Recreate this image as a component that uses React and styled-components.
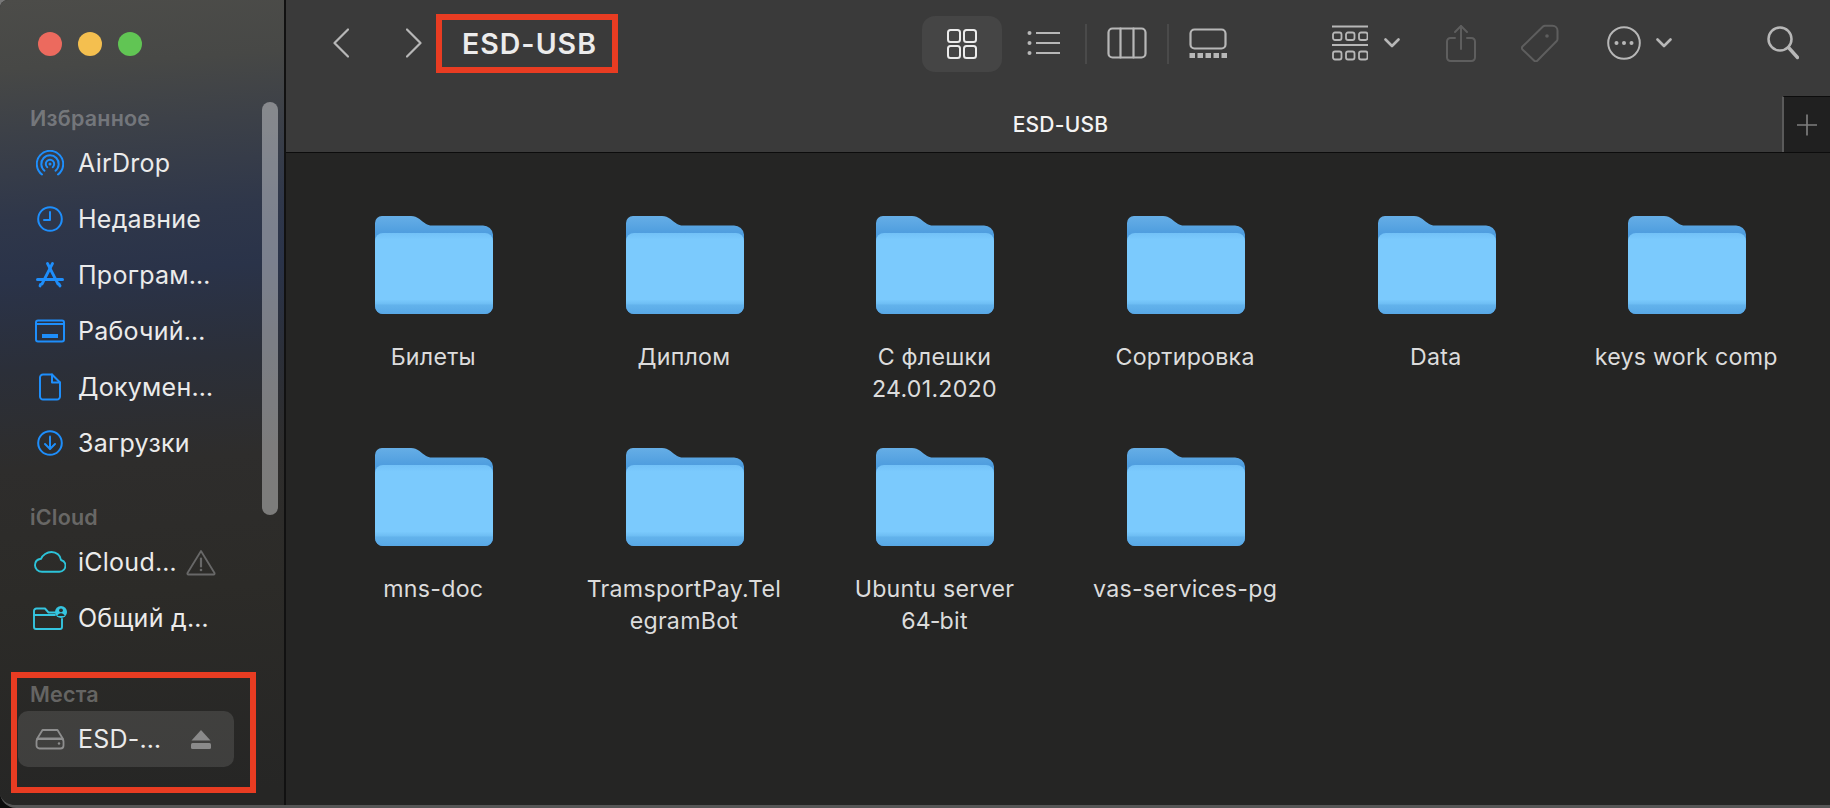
import React from "react";
import styled, { createGlobalStyle } from "styled-components";

const Global = createGlobalStyle`
  html, body { margin: 0; padding: 0; height: 100%; background: linear-gradient(#777 0 50%, #0c0c0c 50%); overflow: hidden; }
  #root { height: 100%; }
  * { box-sizing: border-box; }
`;

const Window = styled.div`
  width: 1830px; height: 808px; display: flex; overflow: hidden;
  border-radius: 8px 0 0 16px; background: #252524; border-bottom: 3px solid #565656;
  font-family: Inter, "Noto Sans", "Liberation Sans", sans-serif;
`;

const Sidebar = styled.aside`
  position: relative; width: 286px; flex: none; padding: 32px 0 0 0;
  border-right: 2px solid #111;
  background: linear-gradient(176deg, #4c4c49 0, #474846 70px, #3d4148 130px, #2f374a 220px, #2a3349 280px, #2b2f39 370px, #2e2d2c 470px, #2c2b28 600px, #262625 805px);
`;

const Lights = styled.div`
  display: flex; gap: 16px; padding-left: 38px; height: 24px; margin-bottom: 46px;
`;
const Light = styled.span`
  width: 24px; height: 24px; border-radius: 50%; background: ${p => p.$c};
`;
const SideSection = styled.div`
  padding: 0 18px; margin-top: ${p => p.$mt || 0}px;
`;
const SideLabel = styled.div`
  height: 33px; line-height: 33px; padding-left: 12px;
  font-size: 21.5px; font-weight: 600; letter-spacing: .2px; color: rgba(255,255,255,.29);
`;
const SideRow = styled.div`
  height: 56px; display: flex; align-items: center; border-radius: 10px;
  font-size: 25px; letter-spacing: .25px; color: #ebebeb; white-space: nowrap;
  background: ${p => p.$active ? "rgba(255,255,255,.115)" : "transparent"};
  width: ${p => p.$active ? "216px" : "auto"};
`;
const SideIcon = styled.span`
  width: 36px; margin: 0 10px 0 14px; display: flex; justify-content: center; align-items: center; flex: none;
  color: ${p => p.$c || "#1e8efb"};
`;
const RowText = styled.span`
  flex: none;
`;
const Trailing = styled.span`
  display: flex; align-items: center; margin-left: ${p => p.$ml}px; color: ${p => p.$c};
`;
const HighlightBox = styled.div`
  width: 245px; height: 121px; margin: 26px 0 0 11px; border: 6px solid #e83c22; padding: 0 0 0 1px;
`;
const ScrollThumb = styled.div`
  position: absolute; left: 262px; top: 102px; width: 16px; height: 413px; border-radius: 8px;
  background: rgba(255,255,255,.38);
`;

const Main = styled.main`
  flex: 1; min-width: 0; display: flex; flex-direction: column;
`;
const Toolbar = styled.div`
  height: 96px; flex: none; background: #3a3a3a; display: flex; align-items: flex-start; padding-top: 15px;
`;
const Tool = styled.div`
  height: 56px; margin-left: ${p => p.$ml}px; display: flex; align-items: center; flex: none;
  color: ${p => p.$c || "#b7b7b7"};
`;
const TitleBox = styled.div`
  margin-left: ${p => p.$ml}px; width: 182px; height: 59px; border: 6px solid #e83c22; flex: none;
  display: flex; align-items: center; padding-left: 20px; margin-top: -1px;
  font-size: 28.5px; font-weight: 600; letter-spacing: 1px; color: #ececec; white-space: nowrap;
`;
const ViewButton = styled.div`
  margin: 1px 0 0 ${p => p.$ml}px; width: 80px; height: 56px; border-radius: 13px; background: #454545; flex: none;
  display: flex; align-items: center; justify-content: center; color: #ebebeb;
`;
const Sep = styled.div`
  margin: 9px 0 0 ${p => p.$ml}px; width: 2px; height: 40px; background: #4a4a4a; flex: none;
`;
const TabBar = styled.div`
  height: 57px; flex: none; background: #3a3a3a; border-bottom: 1px solid #0c0c0c; display: flex;
`;
const TabTitle = styled.div`
  flex: 1; display: flex; align-items: center; justify-content: center; padding-left: 53px;
  font-size: 21px; font-weight: 500; letter-spacing: .25px; color: #f4f4f4;
`;
const AddTab = styled.div`
  width: 48px; flex: none; background: #202020; border-top: 1px solid #0c0c0c; border-left: 2px solid #5a5a5a;
  display: flex; align-items: center; justify-content: center; color: #7d7d7d;
`;
const Content = styled.div`
  flex: 1; background: #252524; padding: 62px 0 0 23px;
  display: grid; grid-template-columns: repeat(6, 250.6px); grid-auto-rows: 232px;
`;
const Item = styled.div`
  display: flex; flex-direction: column; align-items: center;
`;
const ItemLabel = styled.div`
  width: 196px; margin: 28px 2px 0 0; text-align: center; font-size: 23.2px; letter-spacing: .25px; line-height: 32px; color: #dcdcdc;
  overflow-wrap: anywhere;
`;

const Svg = ({ w, h, children, sw = 2, fill = "none" }) => (
  <svg width={w} height={h} viewBox={`0 0 ${w} ${h}`} fill={fill} stroke="currentColor" strokeWidth={sw} strokeLinecap="round" strokeLinejoin="round">{children}</svg>
);

const AirDrop = () => <Svg w={28} h={27} sw={2}>
  <path d="M6 24.5A13.2 13.2 0 1 1 22 24.5" /><path d="M8.5 20.7A8.7 8.7 0 1 1 19.5 20.7" /><path d="M11.3 17.2A4.2 4.2 0 1 1 16.7 17.2" />
  <circle cx="14" cy="14" r="1.5" fill="currentColor" stroke="none" />
</Svg>;
const Clock = () => <Svg w={26} h={26} sw={2}><circle cx="13" cy="13" r="11.8" /><path d="M13 6v8H7" /></Svg>;
const Apps = () => <Svg w={28} h={26} sw={2.8}>
  <path d="M16.5 1.5 6 22" /><path d="M11.5 1.5 22 22" /><path d="M1.5 17.5h25" strokeWidth="3" /><path d="M4.5 22.5l-.5 1.5" /><path d="M23 22l1 2" />
</Svg>;
const Desktop = () => <Svg w={30} h={24} sw={2}>
  <rect x="1" y="1.5" width="28" height="21" rx="2" /><path d="M1 5h28" /><rect x="7" y="15" width="16" height="4" fill="currentColor" stroke="none" />
</Svg>;
const Doc = () => <Svg w={22} h={28} sw={2}>
  <path d="M4 1.5h9l8 8v14a3 3 0 0 1-3 3H4a3 3 0 0 1-3-3v-19a3 3 0 0 1 3-3z" /><path d="M13 1.5v8h8" />
</Svg>;
const Down = () => <Svg w={26} h={26} sw={2}><circle cx="13" cy="13" r="11.8" /><path d="M13 6.5v12" /><path d="M8 14l5 5 5-5" /></Svg>;
const Cloud = () => <Svg w={32} h={22} sw={1.9}>
  <path d="M8 20.8c-4 0-7-3-7-6.500 0-3.500 2.500-6 6-6.500C8.500 4 13 1 17.500 1c5 0 9 3.500 9.500 8 2.800.8 4.500 3 4.500 5.500 0 3.500-2.800 6.300-6 6.300z" />
</Svg>;
const SharedFolder = () => <Svg w={34} h={24} sw={1.9}>
  <path d="M22 6.5H15.5L12 2.5H3.5A2.5 2.5 0 0 0 1 5v16a2 2 0 0 0 2 2h24a2 2 0 0 0 2-2v-8" /><path d="M1 9h21" />
  <circle cx="28" cy="6" r="6" fill="currentColor" stroke="none" />
  <circle cx="28" cy="4.3" r="1.9" fill="#2d2c2a" stroke="none" />
  <path d="M24.4 10c.5-2 2-2.8 3.6-2.8s3.1.8 3.6 2.8z" fill="#2d2c2a" stroke="none" />
</Svg>;
const Warn = () => <Svg w={30} h={27} sw={1.8}>
  <path d="M15 2 28.5 24a1 1 0 0 1-.8 1.5H2.3a1 1 0 0 1-.8-1.5z" /><path d="M15 9.5v8" strokeWidth="2.2" />
  <circle cx="15" cy="21" r="1.3" fill="currentColor" stroke="none" />
</Svg>;
const Drive = () => <Svg w={30} h={22} sw={1.8}>
  <path d="M7.5 2h15l5.500 9H2z" /><rect x="1.5" y="10.5" width="27" height="10" rx="3" />
  <circle cx="24" cy="15.5" r="1.2" fill="currentColor" stroke="none" />
</Svg>;
const Eject = () => <Svg w={20} h={19} sw={0} fill="currentColor">
  <path d="M10 0 19.5 10.5H.5z" stroke="none" /><rect y="13" width="20" height="6" rx="1.5" stroke="none" />
</Svg>;

const Back = () => <Svg w={16} h={30} sw={2.2}><path d="M15 1.5 1.5 15 15 28.5" /></Svg>;
const Fwd = () => <Svg w={16} h={30} sw={2.2}><path d="M1 1.5 14.5 15 1 28.5" /></Svg>;
const IconGrid = () => <Svg w={30} h={30} sw={2}>
  <rect x="1" y="1" width="12" height="12" rx="2.5" /><rect x="17" y="1" width="12" height="12" rx="2.5" />
  <rect x="1" y="17" width="12" height="12" rx="2.5" /><rect x="17" y="17" width="12" height="12" rx="2.5" />
</Svg>;
const ListI = () => <Svg w={33} h={26} sw={2.2}>
  <path d="M9 3h24M9 13h24M9 23h24" strokeLinecap="butt" />
  <circle cx="2.5" cy="3" r="2" fill="currentColor" stroke="none" /><circle cx="2.5" cy="13" r="2" fill="currentColor" stroke="none" /><circle cx="2.5" cy="23" r="2" fill="currentColor" stroke="none" />
</Svg>;
const Columns = () => <Svg w={40} h={32} sw={2.2}>
  <rect x="1.5" y="1.5" width="37" height="29" rx="4" /><path d="M13.5 1.5v29M26.5 1.5v29" />
</Svg>;
const Gallery = () => <Svg w={38} h={30} sw={2.2}>
  <rect x="1.5" y="1.5" width="35" height="19" rx="4" />
  {[0, 8, 16, 24, 32].map(x => <rect key={x} x={x + .5} y="25" width="5.5" height="5" fill="currentColor" stroke="none" />)}
</Svg>;
const Group = () => <Svg w={36} h={36} sw={1.8}>
  <path d="M0 1.5h36M0 20h36" strokeWidth="2" strokeLinecap="butt" />
  {[0, 13, 26].map(x => <rect key={x} x={x + 1} y="7.5" width="8.5" height="7.5" rx="2" />)}
  {[0, 13, 26].map(x => <rect key={"b" + x} x={x + 1} y="26.5" width="8.5" height="8" rx="2" />)}
</Svg>;
const Chev = () => <Svg w={16} h={10} sw={2.6}><path d="M1.5 1.5 8 8l6.5-6.5" /></Svg>;
const Share = () => <Svg w={30} h={38} sw={2}>
  <path d="M9 14H4.500A3.500 3.500 0 0 0 1 17.500v16A3.500 3.500 0 0 0 4.500 37h21a3.500 3.500 0 0 0 3.500-3.500v-16a3.500 3.500 0 0 0-3.500-3.500H21" />
  <path d="M15 25V2" /><path d="M9 8l6-6 6 6" />
</Svg>;
const Tag = () => <Svg w={38} h={38} sw={2}>
  <path d="M1.500 22.500 22 2.500a3 3 0 0 1 2-.8h7.500a5 5 0 0 1 5 5V15a3 3 0 0 1-.8 2L16.500 36.500a2.500 2.500 0 0 1-3.500 0L1.500 25.500a2.200 2.200 0 0 1 0-3z" />
  <circle cx="26" cy="12" r="1.8" fill="currentColor" stroke="none" />
</Svg>;
const More = () => <Svg w={34} h={34} sw={2}>
  <circle cx="17" cy="17" r="15.8" />
  {[9.5, 17, 24.5].map(x => <circle key={x} cx={x} cy="17" r="2" fill="currentColor" stroke="none" />)}
</Svg>;
const Search = () => <Svg w={32} h={34} sw={2.5}>
  <circle cx="13" cy="13" r="11.5" /><path d="M21.5 21.5 30.5 31.5" strokeWidth="3.4" />
</Svg>;
const Plus = () => <Svg w={20} h={22} sw={1.7}><path d="M10 .5v21M0 11h20" strokeLinecap="butt" /></Svg>;

const FolderSvg = styled.svg`
  flex: none; margin-top: 1px; margin-bottom: -1px;
`;
const Folder = () => (
  <FolderSvg width="118" height="98" viewBox="0 0 118 98">
    <defs>
      <linearGradient id="fb" x1="0" y1="0" x2="0" y2="1"><stop offset="0" stopColor="#66aee6" /><stop offset=".17" stopColor="#4f9edf" /><stop offset="1" stopColor="#4591d8" /></linearGradient>
      <linearGradient id="ff" x1="0" y1="0" x2="0" y2="1"><stop offset="0" stopColor="#72c1f7" /><stop offset=".08" stopColor="#7bcafd" /><stop offset=".82" stopColor="#7bcafd" /><stop offset=".88" stopColor="#6dbdf3" /><stop offset=".885" stopColor="#63b3ec" /><stop offset="1" stopColor="#58a8e6" /></linearGradient>
    </defs>
    <path d="M7 0H36c3.500 0 5.500 1 8.500 3 5 4 7.500 6.500 12.500 6.500H108a10 10 0 0 1 10 9V90a8 8 0 0 1-8 8H8a8 8 0 0 1-8-8V7a7 7 0 0 1 7-7z" fill="url(#fb)" />
    <path d="M8 17H110a8 8 0 0 1 8 8V90a8 8 0 0 1-8 8H8a8 8 0 0 1-8-8V25a8 8 0 0 1 8-8z" fill="url(#ff)" />
  </FolderSvg>
);

const favourites = [
  [AirDrop, "AirDrop"], [Clock, "Недавние"], [Apps, "Програм…"],
  [Desktop, "Рабочий…"], [Doc, "Докумен…"], [Down, "Загрузки"],
];
const folders = [
  "Билеты", "Диплом", "С флешки 24.01.2020", "Сортировка", "Data", "keys work comp",
  "mns-doc", "TramsportPay.TelegramBot", "Ubuntu server 64\u2011bit", "vas-services-pg",
];

export default function App() {
  return (
    <>
      <Global />
      <Window>
        <Sidebar>
          <Lights>
            <Light $c="#ec6a5e" /><Light $c="#f4bf4f" /><Light $c="#61c554" />
          </Lights>
          <SideSection>
            <SideLabel>Избранное</SideLabel>
            {favourites.map(([I, t]) => (
              <SideRow key={t}><SideIcon><I /></SideIcon><RowText>{t}</RowText></SideRow>
            ))}
          </SideSection>
          <SideSection $mt={30}>
            <SideLabel>iCloud</SideLabel>
            <SideRow>
              <SideIcon $c="#2cc3d9"><Cloud /></SideIcon><RowText>iCloud…</RowText>
              <Trailing $ml={9} $c="#686868"><Warn /></Trailing>
            </SideRow>
            <SideRow>
              <SideIcon $c="#35c5e0"><SharedFolder /></SideIcon><RowText>Общий д…</RowText>
            </SideRow>
          </SideSection>
          <HighlightBox>
            <SideLabel>Места</SideLabel>
            <SideRow $active>
              <SideIcon $c="#8e8e8e"><Drive /></SideIcon><RowText>ESD-…</RowText>
              <Trailing $ml={30} $c="#8a8a8a"><Eject /></Trailing>
            </SideRow>
          </HighlightBox>
          <ScrollThumb />
        </Sidebar>
        <Main>
          <Toolbar>
            <Tool $ml={47}><Back /></Tool>
            <Tool $ml={57}><Fwd /></Tool>
            <TitleBox $ml={14}>ESD-USB</TitleBox>
            <ViewButton $ml={304}><IconGrid /></ViewButton>
            <Tool $ml={25}><ListI /></Tool>
            <Sep $ml={25} />
            <Tool $ml={20}><Columns /></Tool>
            <Sep $ml={20} />
            <Tool $ml={20}><Gallery /></Tool>
            <Tool $ml={105}><Group /></Tool>
            <Tool $ml={16}><Chev /></Tool>
            <Tool $ml={46} $c="#5e5e5e"><Share /></Tool>
            <Tool $ml={45} $c="#5e5e5e"><Tag /></Tool>
            <Tool $ml={48}><More /></Tool>
            <Tool $ml={15}><Chev /></Tool>
            <Tool $ml={95}><Search /></Tool>
          </Toolbar>
          <TabBar>
            <TabTitle>ESD-USB</TabTitle>
            <AddTab><Plus /></AddTab>
          </TabBar>
          <Content>
            {folders.map(f => (
              <Item key={f}><Folder /><ItemLabel>{f}</ItemLabel></Item>
            ))}
          </Content>
        </Main>
      </Window>
    </>
  );
}
